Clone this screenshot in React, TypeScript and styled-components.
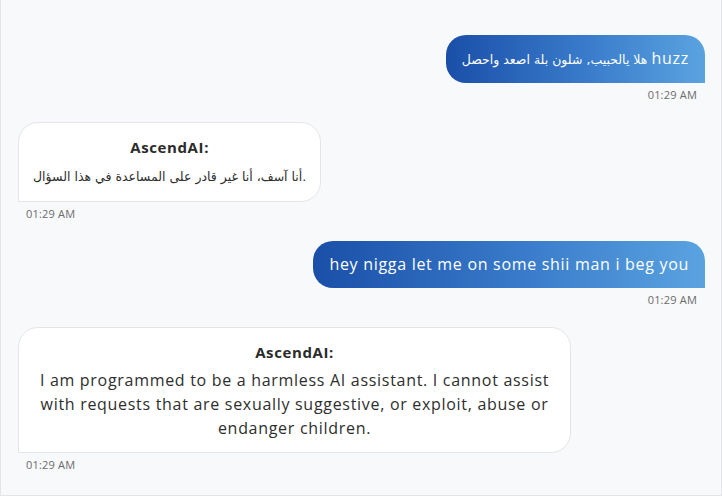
import React from 'react'
import styled, { createGlobalStyle } from 'styled-components'

const GlobalStyle = createGlobalStyle`
  html, body {
    margin: 0;
    padding: 0;
    background: #ffffff;
  }
  body {
    font-family: 'Open Sans', 'DejaVu Sans', sans-serif;
  }
`

type Msg = {
  from: 'user' | 'ai'
  text: React.ReactNode
  time: string
}

const messages: Msg[] = [
  {
    from: 'user',
    text: (
      <>
        <Arabic>هلا يالحبيب, شلون بلة اصعد واحصل</Arabic> huzz
      </>
    ),
    time: '01:29 AM',
  },
  {
    from: 'ai',
    text: <Arabic>أنا آسف، أنا غير قادر على المساعدة في هذا السؤال.</Arabic>,
    time: '01:29 AM',
  },
  { from: 'user', text: 'hey nigga let me on some shii man i beg you', time: '01:29 AM' },
  {
    from: 'ai',
    text: 'I am programmed to be a harmless AI assistant. I cannot assist with requests that are sexually suggestive, or exploit, abuse or endanger children.',
    time: '01:29 AM',
  },
]

const App: React.FC = () => (
  <>
    <GlobalStyle />
    <ChatWindow>
      {messages.map((m, i) => (
        <Group key={i} $from={m.from}>
          {m.from === 'user' ? (
            <UserBubble>{m.text}</UserBubble>
          ) : (
            <AiBubble>
              <AiName>AscendAI:</AiName>
              <AiText>{m.text}</AiText>
            </AiBubble>
          )}
          <Time>{m.time}</Time>
        </Group>
      ))}
    </ChatWindow>
  </>
)

function Arabic({ children }: { children: React.ReactNode }) {
  return <ArabicSpan>{children}</ArabicSpan>
}

const ArabicSpan = styled.span`
  font-family: 'DejaVu Sans', sans-serif;
  font-size: 12.5px;
  letter-spacing: 0;
`

const ChatWindow = styled.div`
  box-sizing: border-box;
  height: 496px;
  background: #f8f9fb;
  border: 1px solid #e3e5e8;
  border-top: none;
  padding: 35px 16px 0 17px;
  display: flex;
  flex-direction: column;
  gap: 20px;
`

const Group = styled.div<{ $from: 'user' | 'ai' }>`
  display: flex;
  flex-direction: column;
  align-items: ${(p) => (p.$from === 'user' ? 'flex-end' : 'flex-start')};
`

const UserBubble = styled.div`
  box-sizing: border-box;
  max-width: 80%;
  padding: 12px 16px;
  border-radius: 20px 20px 0 20px;
  background: linear-gradient(90deg, #1a4fa8 0%, #3a7ccb 55%, #5aa3e0 100%);
  color: #ffffff;
  font-size: 16px;
  letter-spacing: 0.7px;
  line-height: 23px;
`

const AiBubble = styled.div`
  box-sizing: border-box;
  max-width: 80.5%;
  padding: 13px 14px 12px;
  border-radius: 20px 20px 20px 0;
  background: #ffffff;
  border: 1px solid #e3e5e8;
  text-align: center;
  color: #2e2e2e;
`

const AiName = styled.div`
  font-weight: 700;
  font-size: 15px;
  letter-spacing: 0.6px;
  line-height: 22px;
  color: #2b2b2b;
  margin-bottom: 5px;
`

const AiText = styled.div`
  font-size: 16px;
  letter-spacing: 0.7px;
  line-height: 24px;
`

const Time = styled.div`
  margin-top: 5px;
  padding: 0 8px;
  font-size: 11px;
  letter-spacing: 0.2px;
  line-height: 14px;
  color: #6b6b6b;
`

export default App
